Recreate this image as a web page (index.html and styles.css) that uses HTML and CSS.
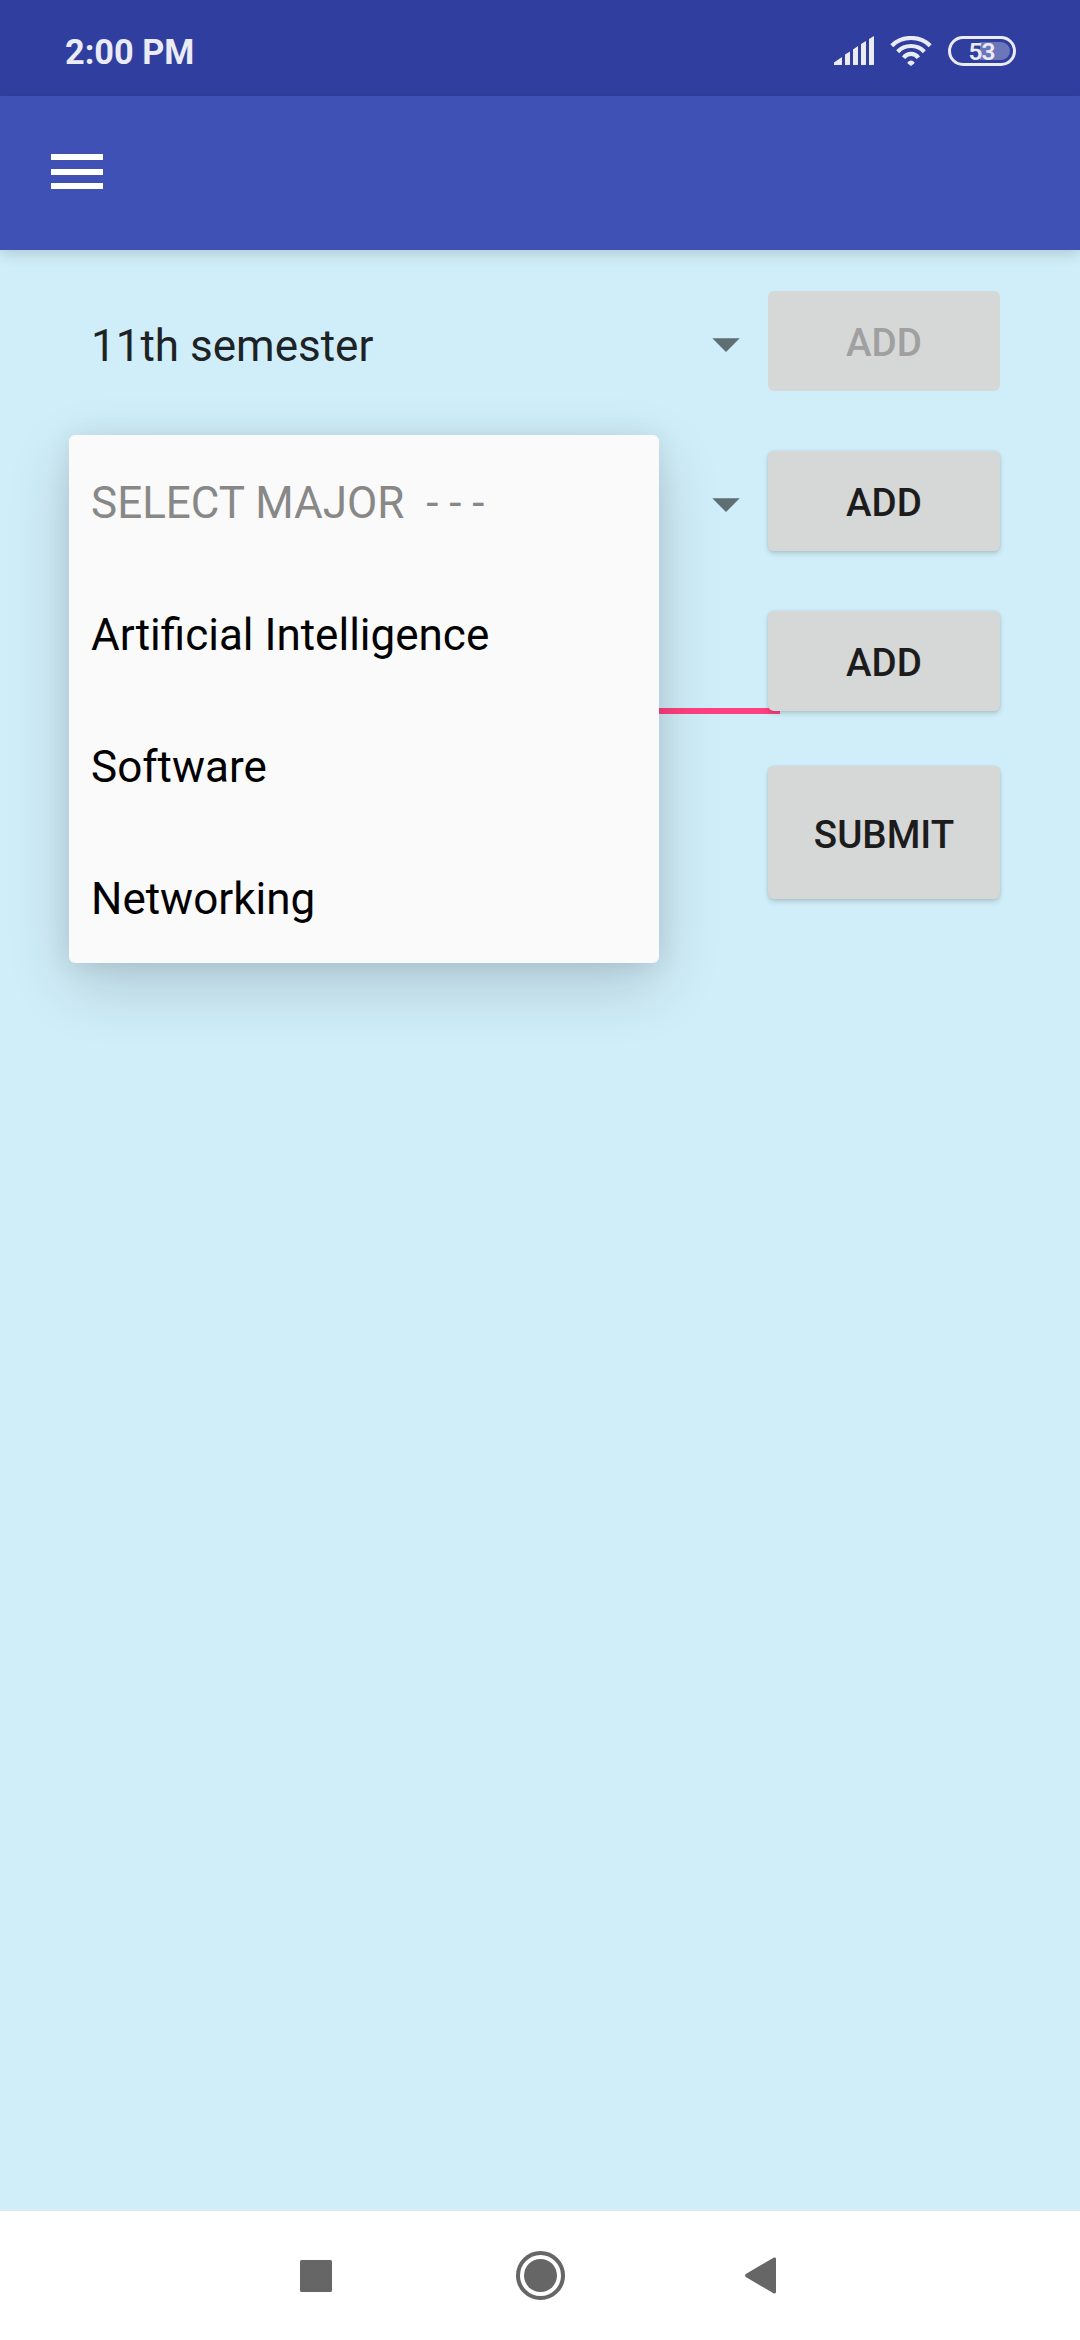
FILE: index.html
```html
<!DOCTYPE html>
<html lang="en">
<head>
<meta charset="utf-8">
<title>Select major</title>
<link rel="stylesheet" href="styles.css">
</head>
<body>
<div class="screen">
  <header class="status">
    <span class="time">2:00 PM</span>
    <div class="indicators">
      <svg class="signal" width="40" height="30" viewBox="0 0 40 30"><path d="M0 29V26.500L8 21V28.500L7.500 29ZM11 29V18.500L16 15.500V28.500L15.500 29H11.500ZM19 29V13.500L24 10V28.500L23.500 29ZM27 29V8L32 5V28.500L31.500 29ZM35 29V3L40 0V28.500L39.500 29Z"/></svg>
      <svg class="wifi" width="42" height="30" viewBox="0 0 42 30"><g class="arcs"><path d="M1.800 9.700Q9.500 2 21 2T40.200 9.700"/><path d="M7.700 15.700Q13 10 21 10T34.300 15.700"/><path d="M13.600 21.700Q16.500 17.900 21 17.900T28.400 21.700"/></g><path class="dot" d="M17.300 26.500Q21 22.500 24.700 26.500Q24.700 27.500 21 30Q17.300 27.500 17.300 26.500Z"/></svg>
      <div class="battery"><span class="charge"></span><span class="level">53</span></div>
    </div>
  </header>
  <nav class="appbar">
    <div class="menu"><i></i><i></i><i></i></div>
  </nav>
  <main class="form">
    <div class="row">
      <div class="spinner"><span>11th semester</span><svg class="caret" width="28" height="14" viewBox="0 0 28 14"><path d="M0.300 0.300H27.700L14 14Z"/></svg></div>
      <button class="button disabled">ADD</button>
    </div>
    <div class="row">
      <div class="spinner"><span></span><svg class="caret" width="28" height="14" viewBox="0 0 28 14"><path d="M0.300 0.300H27.700L14 14Z"/></svg></div>
      <button class="button">ADD</button>
    </div>
    <div class="row">
      <div class="field"></div>
      <button class="button">ADD</button>
    </div>
    <div class="row last"><button class="button submit">SUBMIT</button></div>
    <div class="popup">
      <div class="option hint">SELECT MAJOR&nbsp; - - -</div>
      <div class="option">Artificial Intelligence</div>
      <div class="option">Software</div>
      <div class="option">Networking</div>
    </div>
  </main>
  <footer class="navbar">
    <svg width="32" height="32" viewBox="0 0 32 32"><rect width="32" height="32" rx="1.500"/></svg>
    <svg width="49" height="49" viewBox="0 0 49 49"><circle class="ring" cx="24.500" cy="24.500" r="22.500"/><circle cx="24.500" cy="24.500" r="16.500"/></svg>
    <svg width="32" height="37" viewBox="0 0 32 37"><path d="M0.800 17Q-0.600 18.500 0.800 20L28.500 36.300Q31 37 31 35V2Q31 0 28.500 0.700Z"/></svg>
  </footer>
</div>
</body>
</html>
```
FILE: styles.css
```css
* { box-sizing: border-box; }
body { margin: 0; font-family: Roboto, sans-serif; }
.screen { width: 1080px; height: 2340px; display: flex; flex-direction: column; background: #d0eef9; overflow: hidden; }

.status { height: 96px; flex: none; padding: 6px 64px 0 65px; display: flex; align-items: center; justify-content: space-between; background: #303f9f; color: #ebebf6; }
.time { font-size: 34.300px; font-weight: 700; line-height: 40px; padding-top: 2px; }
.indicators { display: flex; align-items: center; gap: 16px; }
.indicators svg { fill: #ebebf6; display: block; }
.indicators .arcs { fill: none; stroke: #ebebf6; stroke-width: 4.200; }
.battery { position: relative; width: 68px; height: 30px; border: 3px solid #ebebf6; border-radius: 15px; display: flex; align-items: center; justify-content: center; }
.charge { position: absolute; left: 29px; top: 3px; width: 30px; height: 18px; border-radius: 0 9px 9px 0; background: rgba(235, 235, 246, 0.32); }
.level { position: relative; font-size: 24.500px; line-height: 24px; font-weight: 600; letter-spacing: -1px; padding: 1px 1px 0 0; }

.appbar { height: 154px; flex: none; padding: 0 51px; display: flex; align-items: center; background: #3f51b5; box-shadow: 0 4px 13px rgba(0, 0, 0, 0.15); position: relative; }
.menu { width: 52px; display: flex; flex-direction: column; gap: 8.500px; margin-top: -3px; }
.menu i { height: 6px; background: #fff; }

.form { flex: 1; position: relative; padding: 41px 80px 0 69px; display: flex; flex-direction: column; gap: 60px; }
.row { height: 100px; display: flex; align-items: center; }
.last { height: 133px; justify-content: flex-end; margin-top: -5px; }
.spinner { width: 699px; height: 100px; padding: 10px 28.500px 0 22px; display: flex; align-items: center; justify-content: space-between; font-size: 44px; color: #1d2224; }
.caret { fill: #5f6e73; display: block; margin-top: -2px; }
.field { width: 711px; height: 6px; flex: none; align-self: flex-end; margin: 0 -12px -3px 0; background: #ff4081; }
.button { width: 232px; height: 100px; flex: none; position: relative; border: 0; border-radius: 6px; padding: 3px 0 0; background: #d6d7d7; color: #1c1c1c; font-family: Roboto, sans-serif; font-size: 38.500px; font-weight: 500; box-shadow: 0 3px 5px rgba(0, 0, 0, 0.14), 0 0 3px rgba(0, 0, 0, 0.1); }
.disabled { color: #a0a0a0; box-shadow: none; }
.submit { height: 133px; }

.popup { position: absolute; left: 69px; top: 185px; width: 590px; border-radius: 6px; background: #fafafa; box-shadow: 0 22px 64px rgba(0, 0, 0, 0.16), 0 2px 24px rgba(0, 0, 0, 0.08); }
.option { height: 132px; padding: 4px 22px 0; display: flex; align-items: center; font-size: 44px; color: #000; white-space: pre; }
.hint { color: #888; }

.navbar { height: 130px; flex: none; border-top: 1px solid #e4e6e7; padding: 0 303px 0 300px; display: flex; align-items: center; background: #fff; }
.navbar svg { fill: #666; display: block; }
.navbar svg + svg { margin-left: 184px; }
.navbar svg:last-child { margin-left: 180px; }
.navbar .ring { fill: none; stroke: #666; stroke-width: 4; }
```
